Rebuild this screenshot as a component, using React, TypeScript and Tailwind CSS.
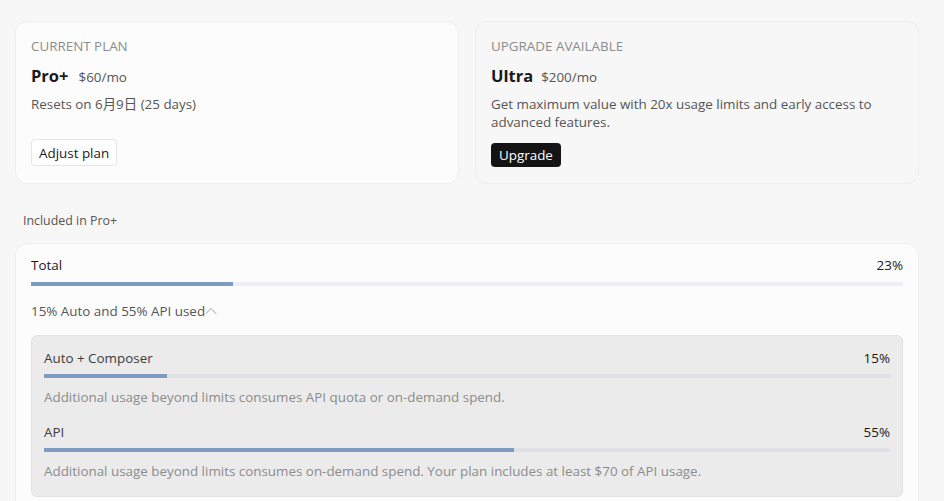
import { ChevronUp } from 'lucide-react';

type Usage = {
  label: string;
  pct: number;
  note: string;
};

const USAGE: Usage[] = [
  {
    label: 'Auto + Composer',
    pct: 14.5,
    note: 'Additional usage beyond limits consumes API quota or on-demand spend.',
  },
  {
    label: 'API',
    pct: 55.5,
    note: 'Additional usage beyond limits consumes on-demand spend. Your plan includes at least $70 of API usage.',
  },
];

function Bar({ pct, track }: { pct: number; track: string }) {
  return (
    <div className={`h-1 w-full overflow-hidden ${track}`}>
      <div className="h-full bg-[#7f9cc0]" style={{ width: `${pct}%` }} />
    </div>
  );
}

export default function App() {
  return (
    <div
      className="min-h-screen bg-[#f7f7f7] pl-[15px] pr-[25px] pt-[21px] text-[13.4px] text-[#3b3b3b]"
      style={{ fontFamily: '"Segoe UI", "Open Sans", "Noto Sans CJK SC", sans-serif' }}
    >
      <div className="grid grid-cols-[444px_444px] gap-[16px]">
        <div className="flex h-[163px] flex-col rounded-xl border border-[#eeeeee] bg-[#fcfcfc] px-[15px] pt-[15px]">
          <p className="leading-[18px] uppercase text-[#8c8c8c]">Current plan</p>
          <div className="mt-[11px] flex items-baseline gap-[10px]">
            <span className="text-[16.5px] font-bold leading-5 text-[#1a1a1a]">Pro+</span>
            <span className="text-[#555]">$60/mo</span>
          </div>
          <p className="mt-[8px] leading-[18px] text-[#555]">Resets on 6月9日 (25 days)</p>
          <div className="mt-[26px]">
            <button
              type="button"
              className="h-[27px] rounded border border-[#e6e6e6] bg-white px-[7px] text-[13.4px] text-[#1a1a1a]"
            >
              Adjust plan
            </button>
          </div>
        </div>

        <div className="flex h-[163px] flex-col rounded-xl border border-[#eeeeee] bg-[#f7f7f7] px-[15px] pt-[15px]">
          <p className="leading-[18px] uppercase text-[#8c8c8c]">Upgrade available</p>
          <div className="mt-[11px] flex items-baseline gap-[8px]">
            <span className="text-[16.5px] font-bold leading-5 text-[#1a1a1a]">Ultra</span>
            <span className="text-[#555]">$200/mo</span>
          </div>
          <p className="mt-[8px] w-[400px] leading-[18px] text-[#555]">
            Get maximum value with 20x usage limits and early access to advanced features.
          </p>
          <div className="mt-[12px]">
            <button
              type="button"
              className="h-[24px] rounded bg-[#141414] px-2 text-[13.4px] text-white"
            >
              Upgrade
            </button>
          </div>
        </div>
      </div>

      <p className="mt-[29px] pl-2 text-[12.4px] leading-4 text-[#555]">Included in Pro+</p>

      <div className="mt-[14px] rounded-xl border border-[#eeeeee] bg-[#fcfcfc] px-[15px] pt-[12px] pb-4">
        <div className="flex items-center justify-between leading-[18px] text-[#1a1a1a]">
          <span>Total</span>
          <span>23%</span>
        </div>
        <div className="mt-[8px]">
          <Bar pct={23.2} track="bg-[#eceef4]" />
        </div>
        <button type="button" className="mt-[16px] flex items-center text-[13.4px] leading-[18px] text-[#555]">
          15% Auto and 55% API used
          <ChevronUp className="-my-1 -ml-[4px] h-5 w-5 text-[#a0a0a0]" strokeWidth={1.2} />
        </button>

        <div className="mt-[15px] flex flex-col gap-[17px] rounded-md border border-[#e2e2e2] bg-[#ebebeb] px-[12px] pt-[13px] pb-[16px]">
          {USAGE.map((u) => (
            <div key={u.label}>
              <div className="flex items-center justify-between leading-[18px] text-[#3b3b3b]">
                <span>{u.label}</span>
                <span className="text-[#1a1a1a]">{Math.round(u.pct / 5) * 5}%</span>
              </div>
              <div className="mt-[7px]">
                <Bar pct={u.pct} track="bg-[#dfe1e6]" />
              </div>
              <p className="mt-[10px] leading-[18px] text-[#8c8c8c]">{u.note}</p>
            </div>
          ))}
        </div>
      </div>
    </div>
  );
}
